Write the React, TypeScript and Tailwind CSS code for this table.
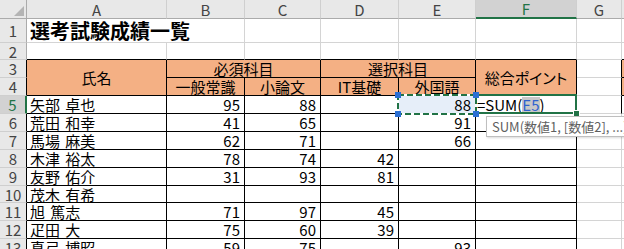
import type { ReactNode } from 'react'

type Row = { name: string; b?: number; c?: number; d?: number; e?: number }

const rows: Row[] = [
  { name: '矢部 卓也', b: 95, c: 88, e: 88 },
  { name: '荒田 和幸', b: 41, c: 65, e: 91 },
  { name: '馬場 麻美', b: 62, c: 71, e: 66 },
  { name: '木津 裕太', b: 78, c: 74, d: 42 },
  { name: '友野 佑介', b: 31, c: 93, d: 81 },
  { name: '茂木 有希' },
  { name: '旭 篤志', b: 71, c: 97, d: 45 },
  { name: '疋田 大', b: 75, c: 60, d: 39 },
  { name: '真弓 博昭', b: 59, c: 75, e: 93 },
]

const letters = ['A', 'B', 'C', 'D', 'E', 'F', 'G', 'H']

const gridCell = 'border-r border-b border-r-[#d4d4d4] border-b-[#d4d4d4]'
const tableCell = 'border-r border-b border-black'
const headFill = 'flex items-center justify-center border-r border-b border-black bg-[#f4b084]'
const numCell = 'flex items-center justify-end pr-[4px] border-r border-b border-black'

function ColHead({ label }: { label: string }) {
  if (label === 'F') {
    return (
      <div className="flex items-center justify-center border-r border-b-2 border-r-[#cfcfcf] border-b-[#217346] bg-[#d2d2d2] text-[#217346]">
        {label}
      </div>
    )
  }
  return (
    <div className="flex items-center justify-center border-r border-b border-r-[#cfcfcf] border-b-[#ababab] bg-[#e8e8e8] text-[#444]">
      {label}
    </div>
  )
}

function RowHead({ n }: { n: number }) {
  if (n === 5) {
    return (
      <div className="flex items-center justify-center border-r-2 border-b border-r-[#217346] border-b-[#cfcfcf] bg-[#d2d2d2] text-[#217346]">
        {n}
      </div>
    )
  }
  if (n < 3) {
    return (
      <div className="flex items-center justify-center border-r border-b border-r-[#ababab] border-b-[#cfcfcf] bg-[#e8e8e8] text-[#444]">
        {n}
      </div>
    )
  }
  return (
    <div className="flex items-center justify-center border-r border-b border-r-black border-b-[#cfcfcf] bg-[#e8e8e8] text-[#444]">
      {n}
    </div>
  )
}

// E5: cell picked up by the formula, with marching ants and corner handles
function PointedCell({ children }: { children: ReactNode }) {
  return (
    <div className="relative flex items-center justify-end border-r border-b border-black bg-[#e6eef9] pr-[4px]">
      {children}
      <div className="absolute -left-[2px] -top-[2px] -right-px -bottom-px z-20">
        <svg width="80" height="21" className="absolute left-0 top-0 overflow-visible">
          <rect x="1" y="1" width="78" height="19" fill="none" stroke="#ffffff" strokeWidth="2" />
          <rect x="1" y="1" width="78" height="19" fill="none" stroke="#217346" strokeWidth="2" strokeDasharray="6 3" />
          <rect x="-2" y="-2" width="6" height="6" fill="#2b6fd3" />
          <rect x="76" y="-2" width="6" height="6" fill="#2b6fd3" />
          <rect x="-2" y="17" width="6" height="6" fill="#2b6fd3" />
          <rect x="76" y="17" width="6" height="6" fill="#2b6fd3" />
        </svg>
      </div>
    </div>
  )
}

// F5: the cell being edited, plus the function hint below it
function EditingCell() {
  return (
    <div className="relative z-10 flex items-center border-r border-b border-black pl-px">
      <span>=SUM(</span>
      <span className="bg-[#c8c8c8] text-[#2f62cf]">E5</span>
      <span>)</span>
      <div className="absolute -left-px -top-[2px] -right-px -bottom-px border-2 border-[#217346]" />
      <div className="absolute -right-[4px] -bottom-[4px] h-[7px] w-[7px] border border-white bg-[#217346]" />
      <div className="absolute left-[10px] top-[20px] flex h-[21px] w-[200px] items-center whitespace-nowrap border border-[#bfbfbf] bg-white pl-[5px] text-[13px] text-[#5f5f5f] shadow-[1px_1px_2px_rgba(0,0,0,0.15)]">
        SUM(数値1, [数値2], ...)
      </div>
    </div>
  )
}

export default function App() {
  return (
    <div className="relative h-[249px] w-[624px] overflow-hidden bg-white font-['Noto_Sans_CJK_JP',sans-serif] text-[15px] leading-none text-black">
      <div className="grid w-max grid-cols-[27px_140px_78px_76px_78px_77px_101px_45px_40px] grid-rows-[19px_24px_17px_18px_18px_18px_18px_18px_18px_18px_17px_18px_18px_18px]">
        {/* header row */}
        <div className="relative border-r border-b border-r-[#ababab] border-b-[#ababab] bg-[#e8e8e8]">
          <svg width="27" height="19" className="absolute left-0 top-0">
            <polygon points="24,6 24,16 14,16" fill="#b4b4b4" />
          </svg>
        </div>
        {letters.map(l => <ColHead key={l} label={l} />)}

        {/* row 1 */}
        <RowHead n={1} />
        <div className="col-span-2 flex items-center whitespace-nowrap border-r border-b border-r-[#d4d4d4] border-b-[#d4d4d4] pl-[3px] text-[20px] font-bold">
          選考試験成績一覧
        </div>
        <div className={gridCell} />
        <div className={gridCell} />
        <div className={gridCell} />
        <div className={gridCell} />
        <div className={gridCell} />
        <div className="border-b border-b-[#d4d4d4]" />

        {/* row 2 */}
        <RowHead n={2} />
        <div className="border-r border-b border-r-[#d4d4d4] border-b-black" />
        <div className="border-r border-b border-r-[#d4d4d4] border-b-black" />
        <div className="border-r border-b border-r-[#d4d4d4] border-b-black" />
        <div className="border-r border-b border-r-[#d4d4d4] border-b-black" />
        <div className="border-r border-b border-r-[#d4d4d4] border-b-black" />
        <div className="border-r border-b border-r-[#d4d4d4] border-b-black" />
        <div className={gridCell} />
        <div className="border-b border-b-black" />

        {/* rows 3-4: table header */}
        <RowHead n={3} />
        <div className={`row-span-2 ${headFill}`}>氏名</div>
        <div className={`col-span-2 ${headFill}`}>必須科目</div>
        <div className={`col-span-2 ${headFill}`}>選択科目</div>
        <div className={`row-span-2 ${headFill} [font-feature-settings:'palt']`}>総合ポイント</div>
        <div className="border-r border-b border-r-black border-b-[#d4d4d4]" />
        <div className="border-b border-b-black bg-[#f4b084]" />

        <RowHead n={4} />
        <div className={headFill}>一般常識</div>
        <div className={headFill}>小論文</div>
        <div className={headFill}>IT基礎</div>
        <div className={headFill}>外国語</div>
        <div className="border-r border-b border-r-black border-b-[#d4d4d4]" />
        <div className="border-b border-b-black bg-[#f4b084]" />

        {/* rows 5-13: scores */}
        {rows.map((r, i) => {
          const n = i + 5
          return [
            <RowHead key={`h${n}`} n={n} />,
            <div key={`a${n}`} className={`flex items-center whitespace-nowrap pl-[3px] [word-spacing:2px] ${tableCell}`}>{r.name}</div>,
            <div key={`b${n}`} className={numCell}>{r.b}</div>,
            <div key={`c${n}`} className={numCell}>{r.c}</div>,
            <div key={`d${n}`} className={numCell}>{r.d}</div>,
            n === 5
              ? <PointedCell key={`e${n}`}>{r.e}</PointedCell>
              : <div key={`e${n}`} className={numCell}>{r.e}</div>,
            n === 5
              ? <EditingCell key={`f${n}`} />
              : <div key={`f${n}`} className={tableCell} />,
            n === 5
              ? <div key={`g${n}`} className="border-r border-b border-r-black border-b-[#d4d4d4]" />
              : <div key={`g${n}`} className={gridCell} />,
            <div key={`x${n}`} className="border-b border-b-[#d4d4d4]" />,
          ]
        })}
      </div>
    </div>
  )
}
